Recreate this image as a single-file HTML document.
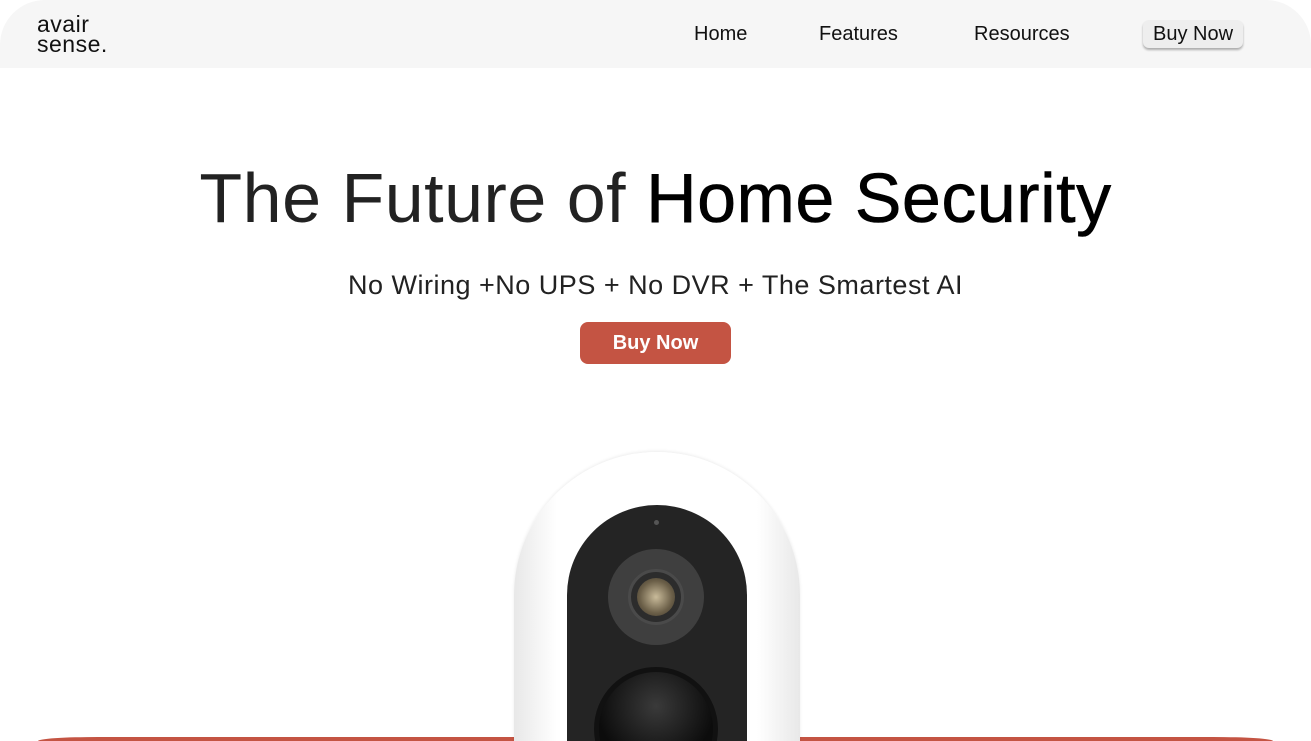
<!DOCTYPE html>
<html style="width:1311px;height:741px;overflow:hidden"><head><style>
*{margin:0;padding:0;box-sizing:border-box}
body{width:1311px;height:741px;overflow:hidden;background:#fff;font-family:"Liberation Sans",sans-serif;position:relative}
.hdr{position:absolute;left:0;top:0;width:1311px;height:68px;background:#f6f6f6;border-radius:45px 45px 0 0}
.logo{position:absolute;left:37px;top:14px;font-size:23px;line-height:20px;color:#111;letter-spacing:0.5px}
.nav{position:absolute;top:23px;font-size:20px;color:#111}
.btn{position:absolute;left:1143px;top:20px;width:100px;height:28px;background:#eee;border-radius:6px;box-shadow:0 2px 2px rgba(0,0,0,.3);font-size:20px;text-align:center;line-height:28px;color:#111}
h1{position:absolute;top:158px;left:0;width:1311px;text-align:center;font-size:70px;font-weight:300;color:#111;letter-spacing:0.5px}
h1 span{color:#222}
h1 b{font-weight:400;color:#000;-webkit-text-stroke:0.6px #000}
.sub{position:absolute;top:270px;width:1311px;text-align:center;font-size:27px;font-weight:300;color:#222;letter-spacing:0.5px}
.cta{position:absolute;left:580px;top:322px;width:151px;height:42px;background:#c45443;border-radius:8px;color:#fff;font-weight:bold;font-size:20px;text-align:center;line-height:42px}
.band{position:absolute;left:38px;top:737px;width:1235px;height:4px;background:#c45443;border-radius:60px 60px 0 0/4px 4px 0 0}
.body{position:absolute;left:514px;top:452px;width:286px;height:289px;background:linear-gradient(90deg,#e8e8e8,#fff 15%,#fff 85%,#e8e8e8);border-radius:143px 143px 0 0;box-shadow:0 -1px 3px rgba(0,0,0,.08)}
.face{position:absolute;left:567px;top:505px;width:180px;height:236px;background:#242424;border-radius:90px 90px 0 0;overflow:hidden}
.dot{position:absolute;left:87px;top:15px;width:5px;height:5px;border-radius:50%;background:#555}
.l1{position:absolute;left:41px;top:44px;width:96px;height:96px;border-radius:50%;background:#3f3f3f}
.l2{position:absolute;left:61px;top:64px;width:56px;height:56px;border-radius:50%;background:#2c2c2c;border:3px solid #4a4a4a}
.l3{position:absolute;left:70px;top:73px;width:38px;height:38px;border-radius:50%;background:radial-gradient(circle at 50% 50%,#c9bb9a,#6b5f48 60%,#3a342a)}
.pir{position:absolute;left:27px;top:162px;width:124px;height:124px;border-radius:50%;background:radial-gradient(circle at 50% 30%,#3a3a3a,#0c0c0c 60%);border:5px solid #111}
.clip{position:absolute;left:0;top:0;width:1311px;height:741px;overflow:hidden}
</style></head><body><div class="clip">
<div class="hdr"></div>
<div class="logo">avair<br>sense.</div>
<div class="nav" style="left:694px">Home</div>
<div class="nav" style="left:819px">Features</div>
<div class="nav" style="left:974px">Resources</div>
<div class="btn">Buy Now</div>
<h1><span>The Future of</span> <b>Home Security</b></h1>
<div class="sub">No Wiring +No UPS + No DVR + The Smartest AI</div>
<div class="cta">Buy Now</div>
<div class="band"></div>
<div class="body"></div>
<div class="face">
<div class="dot"></div>
<div class="l1"></div><div class="l2"></div><div class="l3"></div>
<div class="pir"></div>
</div>
</div></body></html>
